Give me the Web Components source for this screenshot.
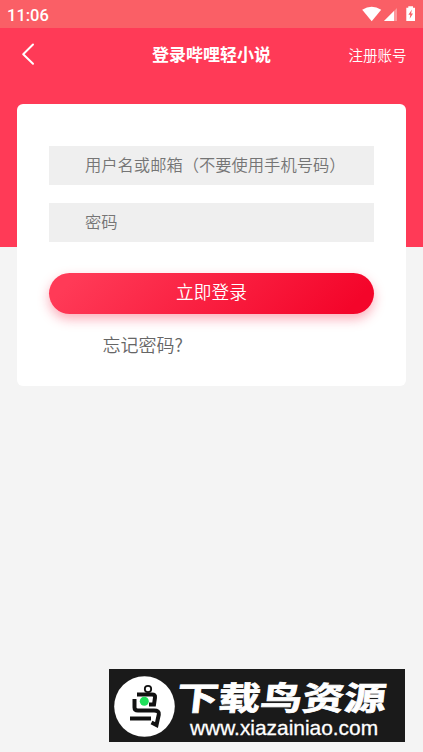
<!DOCTYPE html>
<html lang="zh-CN">
<head>
<meta charset="UTF-8">
<meta name="viewport" content="width=device-width, initial-scale=1">
<title>登录哔哩轻小说</title>
<style>
    html, body {
        margin: 0;
        height: 100%;
    }
    body {
        background: #f4f4f4;
        font-family: "Noto Sans CJK SC", sans-serif;
        font-weight: 350;
        overflow: hidden;
    }
</style>
</head>
<body>
<login-page>
    <status-bar slot="top" data-time="11:06"></status-bar>
    <nav-bar slot="top" data-title="登录哔哩轻小说"><span slot="action">注册账号</span></nav-bar>
    <login-card>
        <text-field data-type="text" data-placeholder="用户名或邮箱（不要使用手机号码）"></text-field>
        <text-field data-type="password" data-placeholder="密码"></text-field>
        <pill-button>立即登录</pill-button>
        <forgot-link>忘记密码?</forgot-link>
    </login-card>
    <site-badge slot="bottom" data-url="www.xiazainiao.com">下载鸟资源</site-badge>
</login-page>

<script>
class LoginPage extends HTMLElement {
    constructor() {
        super();
        this.attachShadow({ mode: 'open' });
    }

    connectedCallback() {
        this.shadowRoot.innerHTML = `
            <style>
                :host {
                    display: flex;
                    flex-direction: column;
                    box-sizing: border-box;
                    height: 100vh;
                    background: linear-gradient(#ff3a57 247px, #f4f4f4 247px);
                }
                main {
                    padding: 24px 17px 0;
                }
                footer {
                    display: flex;
                    justify-content: flex-end;
                    margin-top: auto;
                    padding: 0 18px 10px 0;
                }
            </style>
            <header><slot name="top"></slot></header>
            <main><slot></slot></main>
            <footer><slot name="bottom"></slot></footer>
        `
    }
}

class StatusBar extends HTMLElement {
    constructor() {
        super();
        this.attachShadow({ mode: 'open' });
    }

    connectedCallback() {
        this.shadowRoot.innerHTML = `
            <style>
                :host {
                    display: flex;
                    justify-content: space-between;
                    box-sizing: border-box;
                    height: 28px;
                    padding: 0 7px;
                    background: #fa5f66;
                    color: #fff;
                    font: 500 16.5px/31px Roboto, sans-serif;
                }
                svg {
                    display: block;
                }
            </style>
            <span>${this.dataset.time}</span>
            <svg width="56" height="28" viewBox="360 0 56 28" fill="#fff">
                <path d="M362.2 9.7Q371.7 3.8 381.2 9.7L371.7 21.2Z"/>
                <path d="M397 8V21H384Z" opacity=".35"/>
                <path d="M394 11V21H384Z"/>
                <path d="M408.300 6.200H413V7.700H415V21H406.300V7.700H408.300Z"/>
                <path d="M411.900 9.500L408.400 14.800H410.300L409.700 18.800L413 13.500H411.100Z" fill="#fa5f66"/>
            </svg>
        `
    }
}

class NavBar extends HTMLElement {
    constructor() {
        super();
        this.attachShadow({ mode: 'open' });
    }

    connectedCallback() {
        this.shadowRoot.innerHTML = `
            <style>
                :host {
                    display: grid;
                    grid-template-columns: 1fr auto 1fr;
                    grid-template-rows: 52px;
                    height: 52px;
                    padding: 0 16.5px;
                    color: #fff;
                }
                svg {
                    display: block;
                }
                h1 {
                    margin: 0;
                    font-size: 17px;
                    font-weight: bold;
                    line-height: 51px;
                }
                .action {
                    justify-self: end;
                    font-size: 14.5px;
                    line-height: 53px;
                }
            </style>
            <svg width="22" height="52" viewBox="16.5 28 22 52" fill="none" stroke="#fff" stroke-width="2" stroke-linecap="round" stroke-linejoin="round">
                <path d="M32.500 44.500L22.700 54.200L32.500 63.700"/>
            </svg>
            <h1>${this.dataset.title}</h1>
            <div class="action"><slot name="action"></slot></div>
        `
    }
}

class LoginCard extends HTMLElement {
    constructor() {
        super();
        this.attachShadow({ mode: 'open' });
    }

    connectedCallback() {
        this.shadowRoot.innerHTML = `
            <style>
                :host {
                    display: flex;
                    flex-direction: column;
                    gap: 18px;
                    box-sizing: border-box;
                    height: 282px;
                    padding: 42px 32px 0;
                    border-radius: 6px;
                    background: #fff;
                }
            </style>
            <slot></slot>
        `
    }
}

class TextField extends HTMLElement {
    constructor() {
        super();
        this.attachShadow({ mode: 'open' });
    }

    connectedCallback() {
        this.shadowRoot.innerHTML = `
            <style>
                :host {
                    display: block;
                    height: 39px;
                }
                input {
                    display: block;
                    box-sizing: border-box;
                    width: 100%;
                    height: 39px;
                    padding: 0 0 3px 36px;
                    border: 0;
                    border-radius: 0;
                    outline: 0;
                    background: #efefef;
                    font-family: inherit;
                    font-weight: inherit;
                    font-size: 16.3px;
                }
                input::placeholder {
                    color: #757575;
                }
            </style>
            <input type="${this.dataset.type}" placeholder="${this.dataset.placeholder}">
        `
    }
}

class PillButton extends HTMLElement {
    constructor() {
        super();
        this.attachShadow({ mode: 'open' });
    }

    connectedCallback() {
        this.shadowRoot.innerHTML = `
            <style>
                :host {
                    display: block;
                    padding-top: 12.6px;
                }
                button {
                    display: block;
                    width: 100%;
                    height: 41.6px;
                    padding: 0 0 4px;
                    border: 0;
                    border-radius: 21px;
                    background: linear-gradient(135deg, #ff3a57 8%, #f4052a 92%);
                    box-shadow: 0 5px 12px rgba(245, 20, 55, .35);
                    color: #fff;
                    font-family: inherit;
                    font-weight: inherit;
                    font-size: 17.7px;
                }
            </style>
            <button><slot></slot></button>
        `
    }
}

class ForgotLink extends HTMLElement {
    constructor() {
        super();
        this.attachShadow({ mode: 'open' });
    }

    connectedCallback() {
        this.shadowRoot.innerHTML = `
            <style>
                :host {
                    display: block;
                    padding-left: 53.5px;
                    color: #666;
                    font-size: 18px;
                    line-height: 25px;
                }
            </style>
            <slot></slot>
        `
    }
}

class SiteBadge extends HTMLElement {
    constructor() {
        super();
        this.attachShadow({ mode: 'open' });
    }

    connectedCallback() {
        this.shadowRoot.innerHTML = `
            <style>
                :host {
                    display: flex;
                    box-sizing: border-box;
                    width: 296px;
                    height: 73px;
                    padding-left: 5px;
                    background: #1a1a1a;
                    color: #fff;
                }
                svg {
                    flex: none;
                    margin-top: 7px;
                }
                .text {
                    margin-left: 4px;
                }
                .name {
                    height: 46px;
                    margin-left: -3px;
                    font: bold 32.5px/61px "Liberation Sans", "Noto Sans CJK SC", sans-serif;
                    white-space: nowrap;
                    -webkit-text-stroke: .8px #fff;
                    transform: scaleX(1.29) skewX(-5deg);
                    transform-origin: 4px 100%;
                }
                .url {
                    padding-left: 11px;
                    font: 20.9px/26px "Liberation Sans", sans-serif;
                    -webkit-text-stroke: .3px #fff;
                }
            </style>
            <svg width="61" height="61" viewBox="114 676 61 61" fill="none" stroke="#111" stroke-width="4">
                <circle cx="144.500" cy="706.500" r="30.300" fill="#fff" stroke="none"/>
                <circle cx="148" cy="689" r="3.200" stroke-width="1.800"/>
                <path d="M137 694.500H152Q155.500 694.500 155 697.500L154 704.500H149"/>
                <path d="M134.500 699V707.500Q134.500 710.500 138 710.500H154Q159.500 710.500 158.800 714.500L156.500 725L151.500 722.500"/>
                <path d="M130 718.500H151"/>
                <circle cx="144.300" cy="701.200" r="4.500" fill="#1fe05a" stroke="none"/>
            </svg>
            <div class="text">
                <div class="name"><slot></slot></div>
                <div class="url">${this.dataset.url}</div>
            </div>
        `
    }
}

customElements.define('login-page', LoginPage);
customElements.define('status-bar', StatusBar);
customElements.define('nav-bar', NavBar);
customElements.define('login-card', LoginCard);
customElements.define('text-field', TextField);
customElements.define('pill-button', PillButton);
customElements.define('forgot-link', ForgotLink);
customElements.define('site-badge', SiteBadge);
</script>
</body>
</html>
